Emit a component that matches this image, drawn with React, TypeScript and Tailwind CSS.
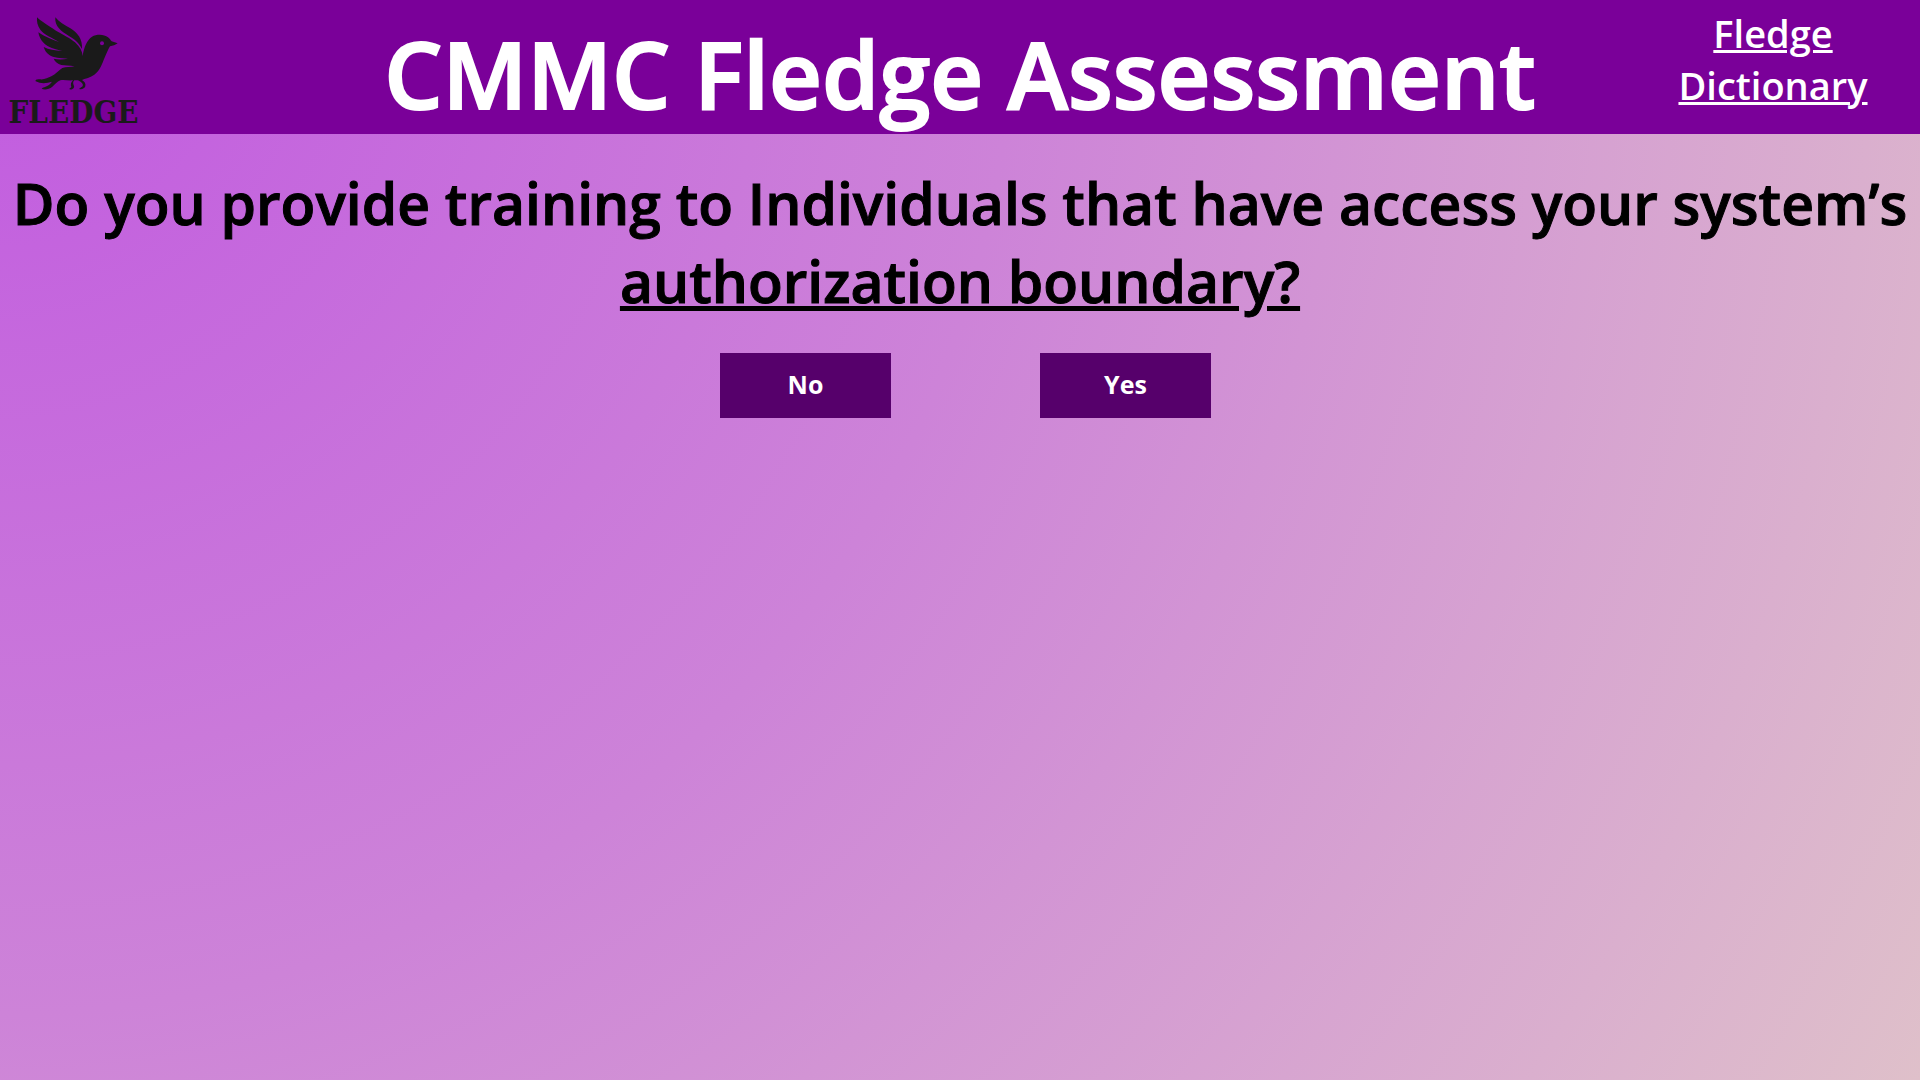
function FledgeLogo() {
  return (
    <a href="#home" aria-label="Fledge home" className="flex w-[147px] flex-col items-center pt-[17px] text-[#1a1a1a]">
      <svg viewBox="105 52 249 219" className="ml-[6px] h-[73px] w-[83px]" aria-hidden="true">
        <g fill="currentColor">
          <path d="M111 53 C122 64 146 78 168 93 C190 106 212 116 225 128 C240 142 247 155 248 169 C252 140 262 120 276 111 C290 103 312 103 324 113 C329 117 332 122 335 125 L353 131 C347 136 338 138 330 140 C325 148 322 156 316 169 C309 184 304 204 291 218 C281 229 268 235 253 238 L246 241 C253 245 258 251 256 260 C254 266 246 270 238 268 C238 265 244 264 248 260 C251 254 246 248 234 242 L223 242 C219 246 218 251 222 259 C224 265 217 271 208 269 C208 265 213 265 214 262 C211 255 213 247 219 242 C203 243 191 240 181 242 C171 246 164 255 157 261 C147 270 132 271 125 267 C128 262 137 262 143 258 C148 255 153 250 156 246 C141 251 123 253 107 245 C105 240 110 238 120 239 C134 240 144 235 154 230 C167 223 176 213 187 205 C197 201 213 203 224 200 C207 197 194 198 184 196 C173 193 164 185 161 177 C174 180 187 180 204 177 C180 175 161 175 148 166 C139 160 134 151 131 142 C147 150 164 153 187 154 C163 148 145 144 132 131 C122 121 117 110 115 98 C130 108 148 117 177 127 C156 113 132 106 121 90 C112 78 110 65 111 53 Z" />
          <path d="M166 53 C177 67 193 76 211 86 C233 99 248 119 246 148 C236 129 225 120 208 110 C184 95 163 80 166 53 Z" />
        </g>
        <circle cx="306" cy="131" r="6" fill="#7a0099" />
      </svg>
      <span className="font-['DejaVu_Serif_Condensed','DejaVu_Serif',serif] text-[31px] leading-[44px] font-bold">FLEDGE</span>
    </a>
  );
}

function AnswerButton({ label }: { label: string }) {
  return (
    <button type="button" className="flex h-[65px] w-[171px] items-center justify-center bg-[#56006b] pb-[2px] text-[25px] font-bold text-white">
      {label}
    </button>
  );
}

export default function App() {
  return (
    <div className="flex min-h-screen flex-col bg-[radial-gradient(circle_at_top_left,#c15ae0_0%,#cd83d8_46%,#dfc0ca_100%)] font-['Open_Sans',sans-serif]">
      <header className="grid h-[134px] grid-cols-[294px_1fr_294px] bg-[#7a0099] text-white">
        <FledgeLogo />
        <h1 className="pt-[14px] text-center text-[92px] leading-[120px] font-semibold whitespace-nowrap [-webkit-text-stroke:2px_white]">
          CMMC Fledge Assessment
        </h1>
        <a href="#dictionary" className="mt-[7px] flex flex-col items-center text-center text-[38px] leading-[52px] font-semibold underline decoration-[3px]">
          <span>Fledge</span>
          <span>Dictionary</span>
        </a>
      </header>
      <main className="flex flex-col items-center pt-[30px] text-black">
        <h2 className="text-center text-[57px] leading-[78px] font-semibold [-webkit-text-stroke:1px_black]">
          Do you provide training to Individuals that have access your system’s
          <br />
          <a href="#authorization-boundary" className="underline">authorization boundary?</a>
        </h2>
        <div className="mt-[33px] ml-[11px] flex gap-[149px]">
          <AnswerButton label="No" />
          <AnswerButton label="Yes" />
        </div>
      </main>
    </div>
  );
}
